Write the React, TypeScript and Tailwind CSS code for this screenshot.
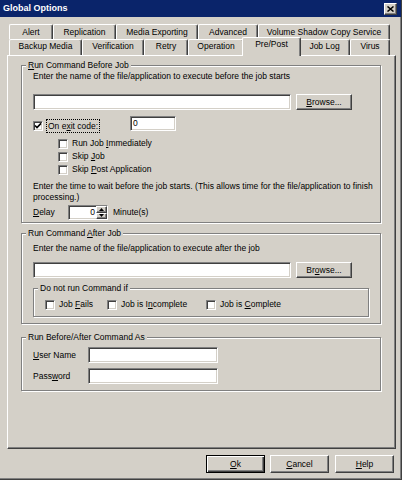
import React from "react";

const sunken =
  "bg-white border border-t-[#808080] border-l-[#808080] border-b-white border-r-white shadow-[inset_1px_1px_0_#404040,inset_-1px_-1px_0_#d4d0c8]";
const raised =
  "bg-[#d4d0c8] border border-t-white border-l-white border-b-[#404040] border-r-[#404040] shadow-[inset_-1px_-1px_0_#808080]";
const groupBox =
  "relative border border-[#808080] shadow-[inset_1px_1px_0_#fff,1px_1px_0_#fff]";

function Box({ checked = false }: { checked?: boolean }) {
  return (
    <span className={`relative block w-[10px] h-[10px] shrink-0 ${sunken}`}>
      {checked && (
        <svg className="absolute left-0 top-0" width="8" height="8" viewBox="0 0 8 8">
          <path d="M1 3.5 L3 5.6 L7 1.4" stroke="#000" strokeWidth="1.6" fill="none" />
        </svg>
      )}
    </span>
  );
}

function Check({ children, checked = false }: { children: React.ReactNode; checked?: boolean }) {
  return (
    <div className="flex items-center gap-[4px]">
      <Box checked={checked} />
      <span className="whitespace-nowrap">{children}</span>
    </div>
  );
}

function GroupLabel({ children }: { children: React.ReactNode }) {
  return (
    <span className="absolute -top-[6px] left-[4px] px-[2px] bg-[#d4d0c8] leading-[11px] whitespace-nowrap">
      {children}
    </span>
  );
}

function Button({ children, w, isDefault = false }: { children: React.ReactNode; w: string; isDefault?: boolean }) {
  const cls = isDefault
    ? "bg-[#d4d0c8] border border-black shadow-[inset_1px_1px_0_#fff,inset_-1px_-1px_0_#404040,inset_-2px_-2px_0_#808080]"
    : raised;
  return <div className={`${cls} ${w} h-full flex items-center justify-center`}>{children}</div>;
}

function Tab({ label, w, row }: { label: string; w: string; row: 1 | 2 }) {
  return (
    <div
      className={`${w} h-full flex justify-center ${row === 1 ? "pt-[2px]" : "pt-[1px]"} border-l border-t border-r border-l-white border-t-white border-r-[#404040] rounded-tl-[2px] rounded-tr-[2px] shadow-[inset_-1px_0_0_#808080] whitespace-nowrap`}
    >
      {label}
    </div>
  );
}

export default function App() {
  return (
    <div className="w-[402px] h-[480px] bg-[#d4d0c8] text-black text-[8.5px] leading-[11px] font-['Liberation_Sans',Arial,sans-serif] border-r border-b border-[#404040] shadow-[inset_-1px_-1px_0_#808080] overflow-hidden">
      {/* Title bar */}
      <div className="h-[17px] bg-[#0a246a] flex items-center justify-between pl-[3px] pr-[4px]">
        <span className="text-white font-bold text-[9px] leading-[11px]">Global Options</span>
        <div className={`${raised} w-[13px] h-[12px] flex items-center justify-center`}>
          <svg width="7" height="6" viewBox="0 0 7 6">
            <path d="M0.5 0.5 L6.5 5.5 M6.5 0.5 L0.5 5.5" stroke="#000" strokeWidth="1.5" />
          </svg>
        </div>
      </div>

      {/* Tabs */}
      <div className="mt-[7px] pl-[9px]">
        <div className="flex h-[15px]">
          <Tab row={1} w="w-[44px]" label="Alert" />
          <Tab row={1} w="w-[63px]" label="Replication" />
          <Tab row={1} w="w-[82px]" label="Media Exporting" />
          <Tab row={1} w="w-[60px]" label="Advanced" />
          <Tab row={1} w="w-[132px]" label="Volume Shadow Copy Service" />
        </div>
        <div className="flex h-[16px] items-start">
          <Tab row={2} w="w-[73px]" label="Backup Media" />
          <Tab row={2} w="w-[62px]" label="Verification" />
          <Tab row={2} w="w-[44px]" label="Retry" />
          <Tab row={2} w="w-[56px]" label="Operation" />
          <div className="relative z-10 w-[59px] h-[19px] -mt-[2px] -ml-[2px] -mr-[2px] bg-[#d4d0c8] flex justify-center pt-[1px] border-l border-t border-r border-l-white border-t-white border-r-[#404040] rounded-tl-[2px] rounded-tr-[2px] shadow-[inset_-1px_0_0_#808080]">
            Pre/Post
          </div>
          <Tab row={2} w="w-[51px]" label="Job Log" />
          <Tab row={2} w="w-[40px]" label="Virus" />
        </div>
      </div>

      {/* Panel */}
      <div className="ml-[7px] w-[389px] h-[394px] border border-t-white border-l-white border-r-[#404040] border-b-[#404040] shadow-[inset_-1px_-1px_0_#808080]">
        {/* Group 1 */}
        <div className={`${groupBox} mt-[9px] ml-[13px] w-[360px] h-[158px]`}>
          <GroupLabel>
            <u>R</u>un Command Before Job
          </GroupLabel>
          <div className="flex flex-col pl-[11px]">
            <div className="mt-[4px] h-[12px] flex items-center whitespace-nowrap">
              Enter the name of the file/application to execute before the job starts
            </div>
            <div className="mt-[12px] h-[16px] flex gap-[5px]">
              <div className={`${sunken} w-[258px] h-full`} />
              <Button w="w-[56px]">
                <span>
                  <u>B</u>rowse...
                </span>
              </Button>
            </div>
            <div className="mt-[6px] h-[17px] flex">
              <div className="w-[97px] flex items-end">
                <div className="h-[14px] flex items-center">
                  <Box checked />
                  <span className="ml-[3px] h-[14px] px-[1px] flex items-center border border-dotted border-black whitespace-nowrap">
                    On e<u>x</u>it code:
                  </span>
                </div>
              </div>
              <div className={`${sunken} w-[46px] h-[15px] flex items-center pl-[2px]`}>0</div>
            </div>
            <div className="mt-[4px] pl-[25px] flex flex-col">
              <div className="h-[13px] flex items-center">
                <Check>
                  Run Job <u>I</u>mmediately
                </Check>
              </div>
              <div className="h-[13px] flex items-center">
                <Check>
                  Skip <u>J</u>ob
                </Check>
              </div>
              <div className="h-[13px] flex items-center">
                <Check>
                  Skip <u>P</u>ost Application
                </Check>
              </div>
            </div>
            <div className="mt-[5px] whitespace-nowrap">
              Enter the time to wait before the job starts. (This allows time for the file/application to finish
              <br />
              processing.)
            </div>
            <div className="mt-[2px] h-[15px] flex items-center">
              <span className="w-[35px]">
                <u>D</u>elay
              </span>
              <div className={`${sunken} w-[40px] h-[15px] flex items-stretch`}>
                <div className="flex-1 flex items-center justify-end pr-[1px]">0</div>
                <div className="w-[11px] flex flex-col">
                  <div className={`${raised} flex-1 flex items-center justify-center`}>
                    <svg width="5" height="3" viewBox="0 0 5 3">
                      <path d="M0 3 L2.5 0 L5 3 Z" fill="#000" />
                    </svg>
                  </div>
                  <div className={`${raised} flex-1 flex items-center justify-center`}>
                    <svg width="5" height="3" viewBox="0 0 5 3">
                      <path d="M0 0 L2.5 3 L5 0 Z" fill="#000" />
                    </svg>
                  </div>
                </div>
              </div>
              <span className="ml-[5px]">Minute(s)</span>
            </div>
          </div>
        </div>

        {/* Group 2 */}
        <div className={`${groupBox} mt-[10px] ml-[13px] w-[360px] h-[91px]`}>
          <GroupLabel>
            Run Command <u>A</u>fter Job
          </GroupLabel>
          <div className="flex flex-col pl-[11px]">
            <div className="mt-[8px] h-[12px] flex items-center whitespace-nowrap">
              Enter the name of the file/application to execute after the job
            </div>
            <div className="mt-[8px] h-[16px] flex gap-[5px]">
              <div className={`${sunken} w-[258px] h-full`} />
              <Button w="w-[56px]">
                <span>
                  Br<u>o</u>wse...
                </span>
              </Button>
            </div>
            <div className={`${groupBox} mt-[10px] w-[336px] h-[29px]`}>
              <GroupLabel>Do not run Command if</GroupLabel>
              <div className="mt-[9px] h-[13px] flex items-center pl-[11px]">
                <div className="w-[62px]">
                  <Check>
                    Job <u>F</u>ails
                  </Check>
                </div>
                <div className="w-[99px]">
                  <Check>
                    Job is I<u>n</u>complete
                  </Check>
                </div>
                <Check>
                  Job is <u>C</u>omplete
                </Check>
              </div>
            </div>
          </div>
        </div>

        {/* Group 3 */}
        <div className={`${groupBox} mt-[13px] ml-[13px] w-[360px] h-[54px]`}>
          <GroupLabel>Run Before/After Command As</GroupLabel>
          <div className="flex flex-col pl-[11px]">
            <div className="mt-[9px] h-[16px] flex items-center">
              <span className="w-[55px]">
                <u>U</u>ser Name
              </span>
              <div className={`${sunken} w-[130px] h-[16px]`} />
            </div>
            <div className="mt-[5px] h-[16px] flex items-center">
              <span className="w-[55px]">
                Pass<u>w</u>ord
              </span>
              <div className={`${sunken} w-[130px] h-[16px]`} />
            </div>
          </div>
        </div>
      </div>

      {/* Buttons */}
      <div className="mt-[6px] h-[18px] flex">
        <div className="ml-[206px] h-full">
          <Button w="w-[59px]" isDefault>
            <span>
              <u>O</u>k
            </span>
          </Button>
        </div>
        <div className="ml-[5px] h-full">
          <Button w="w-[59px]">
            <span>
              <u>C</u>ancel
            </span>
          </Button>
        </div>
        <div className="ml-[6px] h-full">
          <Button w="w-[59px]">
            <span>
              <u>H</u>elp
            </span>
          </Button>
        </div>
      </div>
    </div>
  );
}
